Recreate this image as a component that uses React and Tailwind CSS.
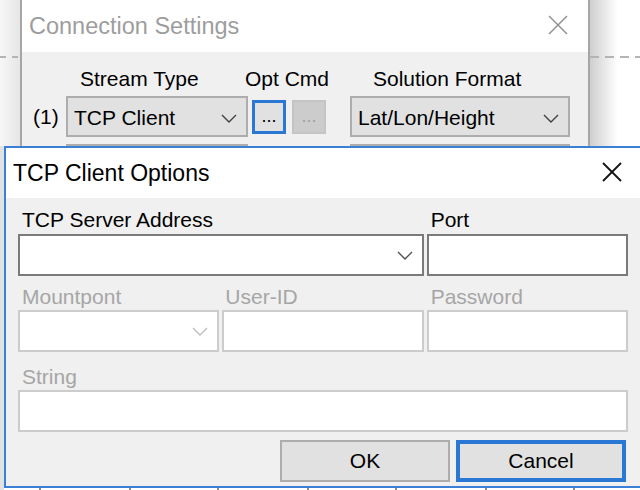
import React from "react";

const Chevron = ({ color = "#404040" }) => (
  <svg width="16" height="9" viewBox="0 0 16 9" className="shrink-0">
    <polyline points="1,1 8,8 15,1" fill="none" stroke={color} strokeWidth="1.4" />
  </svg>
);

const CloseX = ({ color, size = 20, width = 1.6 }) => (
  <svg width={size} height={size} viewBox="0 0 20 20" className="shrink-0">
    <line x1="1" y1="1" x2="19" y2="19" stroke={color} strokeWidth={width} />
    <line x1="19" y1="1" x2="1" y2="19" stroke={color} strokeWidth={width} />
  </svg>
);

function Field({ label, disabled, span, children, labelPad = "pl-[4px]" }) {
  return (
    <div className={span ? "col-span-2 flex flex-col" : "flex flex-col"}>
      <div
        className={`h-[24px] leading-[24px] ${labelPad} ${
          disabled ? "text-[#a6a6a6]" : "text-black"
        }`}
      >
        {label}
      </div>
      {children}
    </div>
  );
}

export default function App() {
  return (
    <div className="relative w-[640px] h-[490px] overflow-hidden bg-white font-['Liberation_Sans',Arial,sans-serif] text-[21px] text-black">
      {/* desktop: shadows, guide line, plot grid ticks */}
      <div className="absolute left-0 top-0 w-[20px] h-[146px] bg-linear-to-r from-[#f7f7f7] to-[#e6e6e6]" />
      <div className="absolute left-[590px] top-0 w-[28px] h-[146px] bg-linear-to-r from-[#cfcfcf] to-white" />
      <div className="absolute left-0 top-[56px] w-[20px] h-[2px] bg-[repeating-linear-gradient(90deg,#b4b4b4_0_6px,transparent_6px_12px)]" />
      <div className="absolute left-[590px] top-[56px] w-[50px] h-[2px] bg-[repeating-linear-gradient(90deg,#b4b4b4_0_9px,transparent_9px_15px)]" />
      <div className="absolute left-0 top-[146px] w-[4px] h-[344px] bg-[#e2e2e2]" />
      <div className="absolute left-0 top-[488px] w-[640px] h-[2px] flex">
        {[39, 129, 217, 307, 395, 485, 573].map((x) => (
          <div key={x} className="absolute top-0 w-[2px] h-[2px] bg-[#8c8c8c]" style={{ left: x }} />
        ))}
      </div>

      {/* Connection Settings window (inactive, behind) */}
      <div className="absolute left-[20px] top-0 w-[570px] h-[160px] border-x-2 border-[#a6a6a6] flex flex-col">
        <div className="h-[52px] bg-white flex items-center justify-between pl-[7px] pr-[20px]">
          <span className="text-[23.5px] leading-[27px] text-[#9d9d9d]">Connection Settings</span>
          <span className="-mt-[2px]">
            <CloseX color="#8f8f8f" width={1.4} />
          </span>
        </div>
        <div className="flex-1 bg-[#f0f0f0] pt-[15px]">
          <div className="flex h-[24px] leading-[24px] pl-[58px]">
            <div className="w-[165px]">Stream Type</div>
            <div className="w-[128px]">Opt Cmd</div>
            <div>Solution Format</div>
          </div>
          <div className="mt-[5px] flex items-center h-[41px] pl-[11px]">
            <div className="w-[33px]">(1)</div>
            <div className="w-[182px] h-[41px] border-2 border-[#adadad] bg-[#e1e1e1] flex items-center justify-between pl-[6px] pr-[9px] pt-[3px]">
              <span>TCP Client</span>
              <Chevron />
            </div>
            <div className="ml-[4px] w-[34px] h-[34px] border-[3px] border-[#2b78d4] bg-[#e1e1e1] flex items-center justify-center leading-none pb-[2px]">
              <span className="text-[18px]">...</span>
            </div>
            <div className="ml-[6px] w-[34px] h-[34px] border-2 border-[#c4c4c4] bg-[#cccccc] flex items-center justify-center leading-none pb-[2px] text-[#a0a0a0]">
              <span className="text-[18px]">...</span>
            </div>
            <div className="ml-[24px] w-[220px] h-[41px] border-2 border-[#adadad] bg-[#e1e1e1] flex items-center justify-between pl-[6px] pr-[9px] pt-[3px]">
              <span>Lat/Lon/Height</span>
              <Chevron />
            </div>
          </div>
          <div className="mt-[7px] flex pl-[44px]">
            <div className="w-[182px] h-[10px] border-2 border-[#adadad] bg-[#e1e1e1]" />
            <div className="ml-[102px] w-[220px] h-[10px] border-2 border-[#adadad] bg-[#e1e1e1]" />
          </div>
        </div>
      </div>

      {/* TCP Client Options dialog (active) */}
      <div className="absolute left-[4px] top-[146px] w-[638px] h-[342px] border-2 border-[#3b80d6] flex flex-col">
        <div className="h-[50px] shrink-0 bg-white flex items-center justify-between pl-[7px] pr-[18px]">
          <span className="text-[23px] leading-[27px] text-black">TCP Client Options</span>
          <span className="-mt-[2px]">
            <CloseX color="#111111" width={1.8} />
          </span>
        </div>
        <div className="flex-1 bg-[#f0f0f0] px-[12px] pt-[10px] flex flex-col">
          <div className="grid grid-cols-3 gap-x-[3px]">
            <Field label="TCP Server Address" span>
              <div className="mt-[2px] h-[42px] border-2 border-[#7a7a7a] bg-white flex items-center justify-end pr-[9px]">
                <Chevron color="#505050" />
              </div>
            </Field>
            <Field label="Port">
              <div className="mt-[2px] h-[42px] border-2 border-[#7a7a7a] bg-white" />
            </Field>
          </div>

          <div className="mt-[9px] grid grid-cols-3 gap-x-[3px]">
            <Field label="Mountpont" disabled>
              <div className="mt-[1px] h-[42px] border-2 border-[#cccccc] bg-white flex items-center justify-end pr-[9px]">
                <Chevron color="#bdbdbd" />
              </div>
            </Field>
            <Field label="User-ID" disabled labelPad="pl-[3px]">
              <div className="mt-[1px] h-[42px] border-2 border-[#cccccc] bg-white" />
            </Field>
            <Field label="Password" disabled>
              <div className="mt-[1px] h-[42px] border-2 border-[#cccccc] bg-white" />
            </Field>
          </div>

          <div className="mt-[13px] flex flex-col">
            <div className="h-[24px] leading-[24px] pl-[4px] text-[#a6a6a6]">String</div>
            <div className="mt-[1px] h-[42px] border-2 border-[#cccccc] bg-white" />
          </div>

          <div className="mt-[8px] flex justify-end gap-[6px] pr-[2px]">
            <div className="w-[170px] h-[42px] border-2 border-[#adadad] bg-[#e1e1e1] flex items-center justify-center">
              OK
            </div>
            <div className="w-[170px] h-[42px] border-4 border-[#2b78d4] bg-[#e1e1e1] flex items-center justify-center">
              Cancel
            </div>
          </div>
        </div>
      </div>
    </div>
  );
}
